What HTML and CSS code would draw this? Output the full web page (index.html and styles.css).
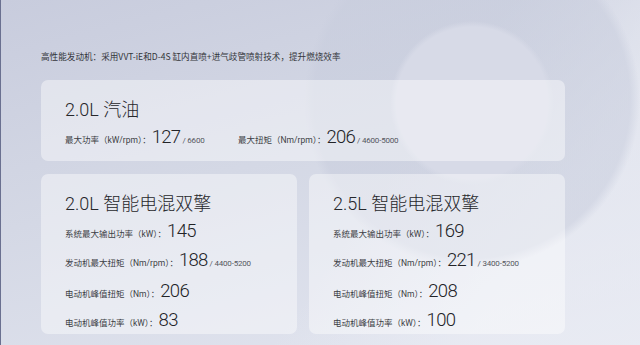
FILE: index.html
```html
<!DOCTYPE html>
<html lang="zh-CN">
<head>
<meta charset="utf-8">
<link rel="stylesheet" href="styles.css">
</head>
<body>
<div class="page">
  <p class="intro">高性能发动机：采用VVT-iE和D-4S 缸内直喷+进气歧管喷射技术，提升燃烧效率</p>
  <section class="card card-wide">
    <h2 class="title">2.0L 汽油</h2>
    <div class="pair">
      <div class="row"><span class="label">最大功率（kW/rpm）：</span><span class="value">127</span><span class="sub">/ 6600</span></div>
      <div class="row"><span class="label">最大扭矩（Nm/rpm）：</span><span class="value">206</span><span class="sub">/ 4600-5000</span></div>
    </div>
  </section>
  <div class="grid">
    <section class="card">
      <h2 class="title">2.0L 智能电混双擎</h2>
      <div class="row"><span class="label">系统最大输出功率（kW）：</span><span class="value">145</span></div>
      <div class="row"><span class="label">发动机最大扭矩（Nm/rpm）：</span><span class="value">188</span><span class="sub">/ 4400-5200</span></div>
      <div class="row"><span class="label">电动机峰值扭矩（Nm）：</span><span class="value">206</span></div>
      <div class="row"><span class="label">电动机峰值功率（kW）：</span><span class="value">83</span></div>
    </section>
    <section class="card">
      <h2 class="title">2.5L 智能电混双擎</h2>
      <div class="row"><span class="label">系统最大输出功率（kW）：</span><span class="value">169</span></div>
      <div class="row"><span class="label">发动机最大扭矩（Nm/rpm）：</span><span class="value">221</span><span class="sub">/ 3400-5200</span></div>
      <div class="row"><span class="label">电动机峰值扭矩（Nm）：</span><span class="value">208</span></div>
      <div class="row"><span class="label">电动机峰值功率（kW）：</span><span class="value">100</span></div>
    </section>
  </div>
</div>
</body>
</html>
```

FILE: styles.css
```css
html, body {
  margin: 0;
  padding: 0;
}
body {
  width: 640px;
  height: 345px;
  overflow: hidden;
  font-family: "Roboto", "Noto Sans CJK SC", sans-serif;
  color: #2e2f33;
  background:
    radial-gradient(circle 82px at 472px 103px, #d7dae7 0, #d7dae7 76px, rgba(215,218,231,0) 82px),
    radial-gradient(circle 168px at 472px 100px, rgba(200,205,221,0.55) 0, rgba(200,205,221,0.55) 158px, rgba(200,205,221,0) 168px),
    linear-gradient(125deg, rgba(255,255,255,0) 58%, rgba(236,238,245,0.6) 80%),
    linear-gradient(165deg, #c8ccdd 0%, #d4d8e5 45%, #e3e6f0 100%);
  box-shadow: inset 1px 0 0 #6a7090;
}
.page {
  padding: 50px 0 0 41px;
  width: 524px;
}
.intro {
  margin: 0 0 18px;
  font-family: "Noto Sans CJK SC", sans-serif;
  font-size: 8.6px;
  line-height: 12px;
  color: #34363b;
}
.card {
  background: rgba(255, 255, 255, 0.42);
  border-radius: 7px;
  padding: 19px 12px 8px 24px;
  box-sizing: border-box;
}
.card-wide {
  height: 81px;
  padding-bottom: 0;
}
.title {
  margin: 0 0 2.5px;
  font-family: "Roboto", "Noto Sans CJK SC", sans-serif;
  font-weight: 300;
  font-size: 18px;
  line-height: 22px;
  color: #26272b;
}
.card-wide .title {
  margin-bottom: 3px;
}
.pair {
  display: grid;
  grid-template-columns: 173px 1fr;
}
.row {
  display: flex;
  align-items: baseline;
  line-height: 26.5px;
  white-space: nowrap;
}
.label {
  font-size: 8.5px;
  color: #3c3e44;
}
.value {
  font-size: 18.5px;
  font-weight: 300;
  letter-spacing: -0.7px;
  color: #222327;
  margin-left: 1px;
}
.sub {
  font-size: 8px;
  font-weight: 400;
  letter-spacing: -0.2px;
  color: #55575e;
  margin-left: 2px;
}
.grid {
  display: grid;
  grid-template-columns: 1fr 1fr;
  gap: 12px;
  margin-top: 13px;
}
.grid .card {
  height: 160px;
}
```
